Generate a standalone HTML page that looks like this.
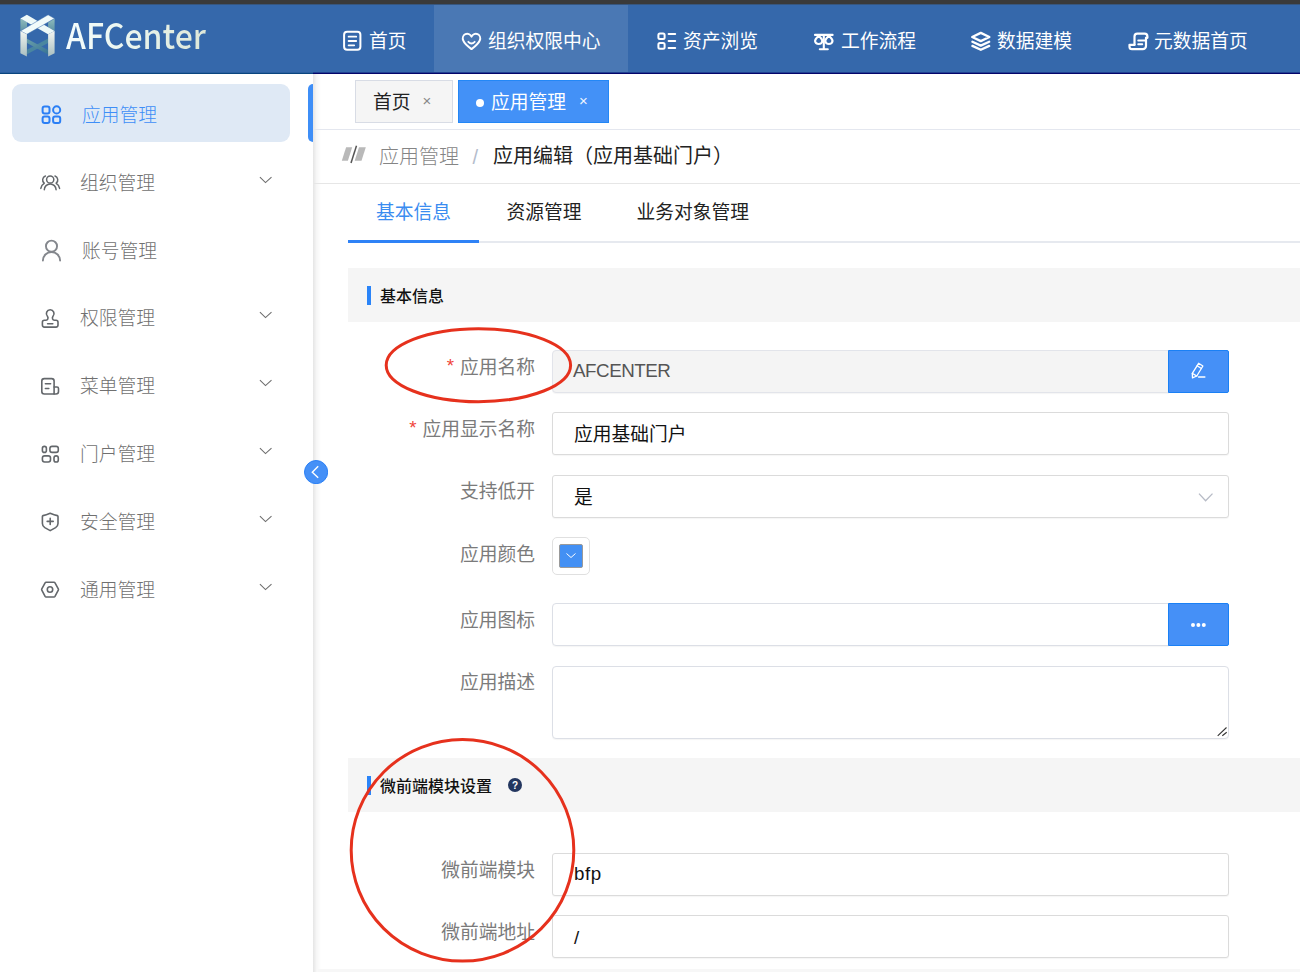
<!DOCTYPE html>
<html lang="zh-CN">
<head>
<meta charset="utf-8">
<title>AFCenter - 应用管理</title>
<style>
*{box-sizing:border-box;margin:0;padding:0}
html,body{width:1300px;height:972px;overflow:hidden;background:#fff}
body{position:relative;font-family:"Liberation Sans","Noto Sans CJK SC",sans-serif;color:#000;font-size:18.75px}
.abs{position:absolute}
#topbar{left:0;top:0;width:1300px;height:5px;background:#37567e;border-top:4px solid #3a3a3a}
#header{left:0;top:4px;width:1300px;height:70px;background:#3568ab}
#hl1{left:0;top:72px;width:1300px;height:1px;background:#214091}
#hl2{left:0;top:73px;width:1300px;height:1px;background:#04056a}
#hl3{left:0;top:72px;width:313px;height:1px;background:#2b5f9f}
#hl4{left:0;top:73px;width:313px;height:1px;background:#0a457f}
#logo-text{left:65.8px;top:9.4px;font-family:"Noto Sans CJK SC","Liberation Sans",sans-serif;font-weight:500;font-size:35px;line-height:50px;white-space:nowrap;transform:scaleX(.915);transform-origin:0 0;color:#e8f3ea;background:linear-gradient(90deg,#f4fdfd 0%,#eaf5ee 45%,#dde7d8 100%);-webkit-background-clip:text;background-clip:text;-webkit-text-fill-color:transparent}
.nav{position:absolute;top:4px;height:68px;color:#fff;font-size:18.75px;line-height:69px;white-space:nowrap}
.nav.active{background:#4a78b4}
.nav svg{position:absolute;top:27px}
.nav span{position:absolute;top:3px;font-weight:400}
#sidebar{left:0;top:74px;width:313px;height:898px;background:#fff}
#sshadow{left:313px;top:74px;width:8px;height:898px;background:linear-gradient(90deg,rgba(0,0,0,.1),rgba(0,0,0,.035) 45%,rgba(0,0,0,0))}
.mi{position:absolute;left:0;width:313px;height:58px;color:#707070;font-weight:300;font-size:18.75px;line-height:58px;white-space:nowrap}
.mi .t{position:absolute;left:80px;top:1px}
.mi svg.ic{position:absolute;left:39px;top:18px}
.mi svg.ar{position:absolute;left:258px;top:21px}
#mi-active{left:12px;top:84px;width:278px;height:58px;background:#dfe9f5;border-radius:9px}
#main{left:313px;top:74px;width:987px;height:898px;background:#fff}
.hline{position:absolute;height:1px;background:#e6e6e6}
.tab{position:absolute;top:80px;height:43px;line-height:43px;font-size:18.75px;white-space:nowrap}
.sec{position:absolute;left:348px;width:952px;height:54px;background:#f5f5f5}
.sec .bar{position:absolute;left:19px;top:18px;width:4px;height:19px;background:#2a84f8}
.sec .tt{position:absolute;left:32px;top:2px;line-height:54px;font-size:16px;font-weight:500;color:#111;white-space:nowrap}
.lbl{position:absolute;left:348px;width:187px;text-align:right;color:#7b7b7b;font-size:18.75px;line-height:28px;white-space:nowrap;font-weight:400}
.lbl i{font-style:normal;color:#f0453a;margin-right:6px;font-family:"Liberation Sans",sans-serif;position:relative;top:-2px}
.inp{position:absolute;left:552px;width:677px;height:43px;border:1px solid #dcdfe6;border-radius:4px;background:#fff;font-size:18.75px;line-height:43px;padding-left:21px;color:#111;white-space:nowrap;box-shadow:0 1px 1px rgba(0,0,0,.04)}
.inp.g{border-color:#dbdbdb;border-radius:3px}
.inp.dis{background:#f4f4f4;color:#555;border-color:#e2e4ea;line-height:40px;padding-left:20px}
.btn{position:absolute;left:1168px;width:61px;height:43px;background:#4590f7;border:1px solid #1a80f5;border-radius:0 2px 2px 0}
</style>
</head>
<body>
<div class="abs" id="header"></div><div class="abs" id="hl1"></div><div class="abs" id="hl2"></div><div class="abs" id="hl3"></div><div class="abs" id="hl4"></div>

<!-- header -->
<svg class="abs" id="logo" style="left:18px;top:12px" width="40" height="48" viewBox="18 12 40 48">
<defs>
<linearGradient id="gp" x1="0" y1="0" x2="0" y2="1"><stop offset="0" stop-color="#f3f5f1"/><stop offset="1" stop-color="#a9bfc0"/></linearGradient>
<linearGradient id="gt" x1="0" y1="0" x2="0" y2="1"><stop offset="0" stop-color="#8fbcbc"/><stop offset="1" stop-color="#5f93a6"/></linearGradient>
<linearGradient id="gb" x1="0" y1="0" x2="1" y2="1"><stop offset="0" stop-color="#6a9fa9"/><stop offset="1" stop-color="#377395"/></linearGradient>
</defs>
<polygon points="20.4,18.5 27,22.3 27,27.2 20.4,31" fill="url(#gt)"/>
<polygon points="54.6,18.5 48.1,22.3 48.1,27.2 54.6,31" fill="url(#gt)"/>
<polygon points="48.1,38.6 27,49.8 27,54.3 48.1,43" fill="#4a86a0"/>
<polygon points="27,38.8 48.1,50 48.1,54.5 27,43" fill="url(#gb)"/>
<polygon points="26.9,14.8 54.6,31 48.1,34.3 20.4,18.5" fill="#eef9f8"/>
<polygon points="48.1,14.8 54.6,18.5 26.9,34.3 20.4,31" fill="#f2fbfa" stroke="#3568ab" stroke-width=".5"/>
<polygon points="20.4,31 26.9,34.3 26.9,56.5 20.4,53.2" fill="url(#gp)"/>
<polygon points="48.1,34.3 54.6,31 54.6,53.2 48.1,56.5" fill="url(#gp)"/>
</svg>
<div class="abs" id="logo-text">AFCenter</div>

<div class="nav" style="left:320px;width:114px"><span style="left:49px">首页</span></div>
<div class="nav active" style="left:434px;width:194px"><span style="left:54px">组织权限中心</span></div>
<div class="nav" style="left:628px;width:160px"><span style="left:55px">资产浏览</span></div>
<div class="nav" style="left:788px;width:160px"><span style="left:53px">工作流程</span></div>
<div class="nav" style="left:948px;width:160px"><span style="left:49px">数据建模</span></div>
<div class="nav" style="left:1108px;width:180px"><span style="left:46px">元数据首页</span></div>

<svg class="abs" style="left:0;top:0;pointer-events:none" width="1300" height="74" viewBox="0 0 1300 74" fill="none" stroke="#fff" stroke-width="2" stroke-linecap="round" stroke-linejoin="round">
<!-- doc -->
<rect x="344.1" y="31.8" width="16.3" height="18" rx="3"/>
<path d="M348.6 36.7H356.2M348.6 41H356.2M348.6 45.3H354.2" stroke-width="1.8"/>
<!-- heart -->
<path d="M471.5 36.6C470.3 34.2 467.6 33.2 465.4 34.2C463.2 35.2 462.2 38 463.2 40.4C464.4 43.4 468 46.6 471.5 49.1C475 46.6 478.6 43.4 479.8 40.4C480.8 38 479.8 35.2 477.6 34.2C475.4 33.2 472.7 34.2 471.5 36.6Z"/>
<path d="M468.3 41.8Q471.5 45.2 474.7 41.8" stroke-width="1.8"/>
<!-- list -->
<rect x="658.4" y="33.4" width="6.2" height="5.6" rx="1.5"/>
<rect x="658.4" y="43.1" width="6.2" height="5.6" rx="1.5"/>
<path d="M668.6 34H675.2M668.6 41H675.2M668.6 48H675.2"/>
<!-- scale -->
<path d="M815 34.9H832.6M823.8 34.9V49.2M819.8 49.3H827.8" stroke-width="2.1"/>
<path d="M818.7 35.8C816.6 37.6 815.1 39.6 815.1 41A3.6 3 0 0 0 822.3 41C822.3 39.6 820.8 37.6 818.7 35.8Z" stroke-width="2.2"/>
<path d="M828.9 35.8C826.8 37.6 825.3 39.6 825.3 41A3.6 3 0 0 0 832.5 41C832.5 39.6 831 37.6 828.9 35.8Z" stroke-width="2.2"/>
<!-- layers -->
<path d="M980.8 32.9L989.4 37L980.8 41.1L972.2 37Z" stroke-width="2.3"/>
<path d="M972.4 41.7L980.8 45.6L989.2 41.7M972.4 45.9L980.8 49.8L989.2 45.9" stroke-width="2.3"/>
<!-- scroll -->
<path d="M1134.5 44.8V36.4A2.8 2.8 0 0 1 1137.3 33.6H1144.6A2.8 2.8 0 0 1 1147.4 36.4V37.8H1146" stroke-width="2.2"/>
<path d="M1146 37.8V46A3.2 3.2 0 0 1 1142.8 49.2H1132A2.5 2.5 0 0 1 1129.5 46.7V44.8H1134.5" stroke-width="2.2"/>
<path d="M1138.2 40.5H1145.5M1138.2 44.2H1142.3" stroke-width="1.9"/>
</svg>
<div class="abs" id="topbar"></div>
<div class="abs" id="sidebar"></div>
<div class="abs" id="main"></div><div class="abs" id="sshadow"></div>
<!-- sidebar -->
<div class="abs" id="mi-active"></div>
<div class="abs" style="left:308px;top:84px;width:5px;height:58px;background:#3e8ef7;border-radius:5px 0 0 5px"></div>
<div class="mi" style="top:86px;color:#3e8ef7"><span class="t" style="left:82px">应用管理</span></div>
<div class="mi" style="top:154px"><span class="t">组织管理</span><svg class="ar" width="16" height="10" viewBox="0 0 16 10"><path d="M1.9 2.1L7.5 7.6L13.5 2.1" fill="none" stroke="#6e6e6e" stroke-width="1.1"/></svg></div>
<div class="mi" style="top:222px"><span class="t" style="left:82px">账号管理</span></div>
<div class="mi" style="top:289px"><span class="t">权限管理</span><svg class="ar" width="16" height="10" viewBox="0 0 16 10"><path d="M1.9 2.1L7.5 7.6L13.5 2.1" fill="none" stroke="#6e6e6e" stroke-width="1.1"/></svg></div>
<div class="mi" style="top:357px"><span class="t">菜单管理</span><svg class="ar" width="16" height="10" viewBox="0 0 16 10"><path d="M1.9 2.1L7.5 7.6L13.5 2.1" fill="none" stroke="#6e6e6e" stroke-width="1.1"/></svg></div>
<div class="mi" style="top:425px"><span class="t">门户管理</span><svg class="ar" width="16" height="10" viewBox="0 0 16 10"><path d="M1.9 2.1L7.5 7.6L13.5 2.1" fill="none" stroke="#6e6e6e" stroke-width="1.1"/></svg></div>
<div class="mi" style="top:493px"><span class="t">安全管理</span><svg class="ar" width="16" height="10" viewBox="0 0 16 10"><path d="M1.9 2.1L7.5 7.6L13.5 2.1" fill="none" stroke="#6e6e6e" stroke-width="1.1"/></svg></div>
<div class="mi" style="top:561px"><span class="t">通用管理</span><svg class="ar" width="16" height="10" viewBox="0 0 16 10"><path d="M1.9 2.1L7.5 7.6L13.5 2.1" fill="none" stroke="#6e6e6e" stroke-width="1.1"/></svg></div>
<svg class="abs" style="left:303.9px;top:460.3px" width="24.2" height="24.2" viewBox="0 0 24.2 24.2"><circle cx="12.1" cy="12.1" r="11.6" fill="#4590f7" stroke="#2a80f5" stroke-width="1"/><path d="M14.2 6.2L8.3 12.2L14.2 17.8" fill="none" stroke="#fff" stroke-width="1.4"/></svg>


<svg class="abs" style="left:0;top:74px;pointer-events:none" width="314" height="560" viewBox="0 74 314 560" fill="none" stroke="#63676b" stroke-width="1.6" stroke-linecap="round" stroke-linejoin="round">
<!-- apps (active) -->
<g stroke="#2b7ff5" stroke-width="2">
<rect x="42.6" y="106.6" width="6.9" height="6.8" rx="2"/>
<circle cx="56.65" cy="109.9" r="3.55"/>
<rect x="42.6" y="116.5" width="6.9" height="6.6" rx="2"/>
<rect x="53.1" y="116.5" width="7.1" height="6.6" rx="2"/>
</g>
<!-- group -->
<g stroke-width="1.5">
<circle cx="50.2" cy="179.5" r="3.6"/>
<path d="M44.3 189.8A5.9 5.9 0 0 1 56.1 189.8"/>
<path d="M45.4 176A4.2 4.2 0 0 0 44.2 183.2M44.2 183.4Q41.4 185 40.8 188.4"/>
<path d="M55 176A4.2 4.2 0 0 1 56.2 183.2M56.2 183.4Q59 185 59.6 188.4"/>
</g>
<!-- user -->
<g stroke="#84878d" stroke-width="1.9">
<circle cx="51.5" cy="246.2" r="5.55"/>
<path d="M42.9 260.6A8.6 8.6 0 0 1 60.1 260.6"/>
</g>
<!-- stamp -->
<path d="M50.2 309.8A3.8 3.8 0 0 1 53 316.2Q52 317.6 52.6 319Q53 320.2 54.4 320.2H56A2 2 0 0 1 58 322.2V325.1A2 2 0 0 1 56 327.1H44.4A2 2 0 0 1 42.4 325.1V322.2A2 2 0 0 1 44.4 320.2H46Q47.4 320.2 47.8 319Q48.4 317.6 47.4 316.2A3.8 3.8 0 0 1 50.2 309.8Z"/>
<path d="M47.6 323.7H52.8"/>
<!-- menu -->
<path d="M44.3 378.6H51.6A2.5 2.5 0 0 1 54.1 381.1V394H44.3A2.5 2.5 0 0 1 41.8 391.5V381.1A2.5 2.5 0 0 1 44.3 378.6Z"/>
<path d="M54.1 387H57A1.5 1.5 0 0 1 58.5 388.5V391.5A2.5 2.5 0 0 1 56 394H54.1"/>
<path d="M45.4 383.8H50.6M45.4 388.5H48.8"/>
<!-- portal -->
<rect x="42.4" y="446.4" width="4" height="6" rx="2"/>
<rect x="49.9" y="446.4" width="8.4" height="6" rx="2.2"/>
<rect x="42.4" y="455.9" width="8.1" height="6.1" rx="2.2"/>
<rect x="54" y="455.9" width="4.3" height="6.1" rx="2.1"/>
<!-- shield -->
<path d="M50.2 513.2Q54.4 514.9 57.4 515.6Q58 515.8 58 516.6V523.4Q58 526 55.6 527.6L50.2 530.6L44.8 527.6Q42.4 526 42.4 523.4V516.6Q42.4 515.8 43 515.6Q46 514.9 50.2 513.2Z"/>
<path d="M47.2 521.4H53.2M50.2 518.4V524.4"/>
<!-- hex -->
<path d="M46.1 582.3H54A1.2 1.2 0 0 1 55 582.9L58.3 588.9A1.2 1.2 0 0 1 58.3 590.1L55 596.4A1.2 1.2 0 0 1 54 597H46.1A1.2 1.2 0 0 1 45.1 596.4L41.8 590.1A1.2 1.2 0 0 1 41.8 588.9L45.1 582.9A1.2 1.2 0 0 1 46.1 582.3Z"/>
<circle cx="50" cy="589.5" r="2.7"/>
</svg>
<!-- main -->
<div class="tab" style="left:355px;width:98px;background:#f5f5f5;border:1px solid #d8dce5;color:#222"><span class="abs" style="left:17px;top:0">首页</span><span class="abs" style="left:66.5px;top:-2.5px;font-size:15px;color:#888;font-family:'Liberation Sans',sans-serif">×</span></div>
<div class="tab" style="left:458px;width:151px;background:#4391f7;color:#fff;box-shadow:inset 0 0 0 1px #2387f6"><span class="abs" style="left:17.5px;top:18.7px;width:8.8px;height:8.8px;border-radius:50%;background:#fff"></span><span class="abs" style="left:33px;top:1px">应用管理</span><span class="abs" style="left:121px;top:-1.5px;font-size:15px;color:#eef4ff;font-family:'Liberation Sans',sans-serif">×</span></div>
<div class="hline" style="left:314px;top:129px;width:986px;background:#e4e7ef"></div>
<svg class="abs" style="left:340px;top:144px" width="28" height="20" viewBox="340 144 28 20"><polygon points="346.1,147.3 352.2,147.3 347.9,160.8 341.8,160.8" fill="#b9b9b9"/><polygon points="359,147.3 365.8,147.3 361.5,160.8 354.7,160.8" fill="#b9b9b9"/><path d="M356.5 145.8L351 163" stroke="#555" stroke-width="1.5"/></svg>
<div class="abs" style="left:379px;top:142px;font-size:20px;line-height:30px;color:#858585;font-weight:300;white-space:nowrap">应用管理</div>
<div class="abs" style="left:472.5px;top:141.5px;font-size:20px;line-height:30px;color:#b4bccc;font-family:'Liberation Sans',sans-serif">/</div>
<div class="abs" style="left:493px;top:141px;font-size:20px;line-height:30px;color:#222;white-space:nowrap">应用编辑（应用基础门户）</div>
<div class="hline" style="left:314px;top:183px;width:986px"></div>
<div class="abs" style="left:376px;top:198.6px;line-height:28px;color:#3a8cf0;white-space:nowrap">基本信息</div>
<div class="abs" style="left:506.5px;top:198.6px;line-height:28px;color:#222;white-space:nowrap">资源管理</div>
<div class="abs" style="left:636.5px;top:198.6px;line-height:28px;color:#222;white-space:nowrap">业务对象管理</div>
<div class="abs" style="left:348px;top:241px;width:952px;height:2px;background:#e6e9ef"></div>
<div class="abs" style="left:348px;top:240px;width:130.5px;height:2.5px;background:#2f82f6"></div>

<div class="sec" style="top:268px"><div class="bar"></div><div class="tt">基本信息</div></div>

<div class="lbl" style="top:353.5px"><i>*</i>应用名称</div>
<div class="inp dis" style="top:350px;width:617px;border-radius:4px 0 0 4px;letter-spacing:-0.45px">AFCENTER</div>
<div class="btn" style="top:350px"></div>
<svg class="abs" style="left:1188px;top:360px" width="22" height="22" viewBox="1188 360 22 22" fill="none" stroke="#fff" stroke-width="1.3" stroke-linejoin="round" stroke-linecap="round"><path d="M1198.6 363.3L1202.9 366L1196.8 376L1192.5 377.9L1192.3 373.4Z"/><path d="M1197.1 365.8L1201.4 368.5M1192.3 373.4L1196.8 376"/><path d="M1198.6 377.1H1204.8" stroke-width="1.5"/></svg>

<div class="lbl" style="top:416px"><i>*</i>应用显示名称</div>
<div class="inp g" style="top:412px">应用基础门户</div>

<div class="lbl" style="top:478.4px">支持低开</div>
<div class="inp g" style="top:475px">是</div>
<svg class="abs" style="left:1197px;top:491px" width="18" height="12" viewBox="0 0 18 12"><path d="M2 2.6L8.6 9.8L15.5 2.6" fill="none" stroke="#b7bbc6" stroke-width="1.3"/></svg>

<div class="lbl" style="top:540.5px">应用颜色</div>
<div class="abs" style="left:552px;top:537px;width:38px;height:38px;border:1px solid #e0e0e0;border-radius:5px;background:#fff"><div class="abs" style="left:6px;top:6px;width:24px;height:24px;background:#4390f4;border:1px solid #9a9a9a;border-radius:2px"></div><svg class="abs" style="left:12px;top:14px" width="12" height="8" viewBox="0 0 12 8"><path d="M1.5 1.5 L6 5.5 L10.5 1.5" fill="none" stroke="#fff" stroke-width="1"/></svg></div>

<div class="lbl" style="top:607px">应用图标</div>
<div class="inp" style="top:603px;width:617px;border-radius:4px 0 0 4px"></div>
<div class="btn" style="top:603px"><span class="abs" style="left:21.9px;top:18.6px;width:4px;height:4px;border-radius:50%;background:#fff;box-shadow:5.4px 0 0 #fff,10.8px 0 0 #fff"></span></div>

<div class="lbl" style="top:669.4px">应用描述</div>
<div class="inp" style="top:666px;height:73px"></div>
<svg class="abs" style="left:1216px;top:725px" width="12" height="12" viewBox="0 0 12 12"><path d="M1.7 10.8L10.5 2.5M6.3 10.8L10.7 7.3" stroke="#333" stroke-width="1.1"/></svg>

<div class="sec" style="top:758px"><div class="bar"></div><div class="tt">微前端模块设置</div><svg class="abs" style="left:160px;top:20px" width="14" height="14" viewBox="0 0 14 14"><circle cx="7" cy="7" r="7" fill="#23365f"/><text x="7" y="10.6" font-size="10" font-weight="700" fill="#fff" text-anchor="middle" font-family="Liberation Sans, sans-serif">?</text></svg></div>

<div class="lbl" style="top:856.6px">微前端模块</div>
<div class="inp g" style="top:853px;line-height:40px;letter-spacing:.5px">bfp</div>
<div class="lbl" style="top:919px">微前端地址</div>
<div class="inp g" style="top:915px">/</div>
<div class="abs" style="left:318px;top:969px;width:982px;height:3px;background:#f7f7f7"></div>

<!-- annotations -->
<svg class="abs" style="left:0;top:0;pointer-events:none" width="1300" height="972" viewBox="0 0 1300 972">
<ellipse cx="478.4" cy="365.2" rx="92.2" ry="36.5" fill="none" stroke="#e6311d" stroke-width="3"/>
<ellipse cx="462.5" cy="850.3" rx="111.3" ry="110.8" fill="none" stroke="#e6311d" stroke-width="3"/>
</svg>

</body>
</html>
